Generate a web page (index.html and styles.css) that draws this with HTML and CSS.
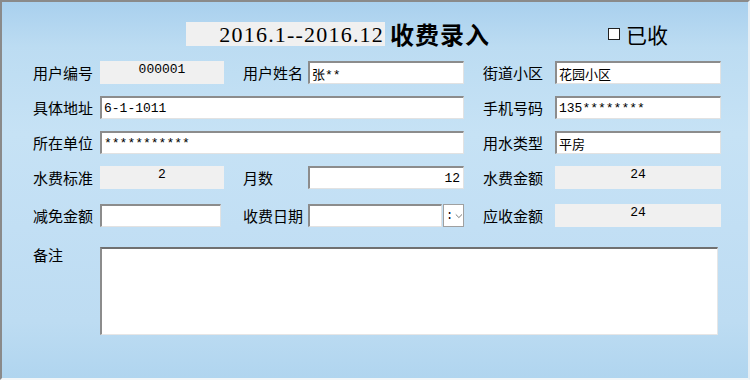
FILE: index.html
```html
<!DOCTYPE html>
<html lang="zh-CN">
<head>
  <meta charset="UTF-8">
  <title>收费录入</title>
  <link rel="stylesheet" href="styles.css">
</head>
<body>
  <div class="window">
    <!-- Header -->
    <div class="title-row">
      <div class="period">2016.1--2016.12</div>
      <h1 class="title">收费录入</h1>
      <label class="paid"><span class="check"></span>已收</label>
    </div>

    <!-- Form -->
    <div class="form">
      <div class="row">
        <span class="lbl c1">用户编号</span>
        <div class="readout c-f1">000001</div>
        <span class="lbl c2">用户姓名</span>
        <input class="field c-f2" value="张**">
        <span class="lbl c3">街道小区</span>
        <input class="field c-f3" value="花园小区">
      </div>

      <div class="row">
        <span class="lbl c1">具体地址</span>
        <input class="field wide" value="6-1-1011">
        <span class="lbl c3">手机号码</span>
        <input class="field c-f3" value="135********">
      </div>

      <div class="row">
        <span class="lbl c1">所在单位</span>
        <input class="field wide" value="***********">
        <span class="lbl c3">用水类型</span>
        <input class="field c-f3" value="平房">
      </div>

      <div class="row">
        <span class="lbl c1">水费标准</span>
        <div class="readout c-f1">2</div>
        <span class="lbl c2">月数</span>
        <input class="field c-f2 num" value="12">
        <span class="lbl c3">水费金额</span>
        <div class="readout c-f3">24</div>
      </div>

      <div class="row row-date">
        <span class="lbl c1">减免金额</span>
        <input class="field c-f1 short" value="">
        <span class="lbl c2">收费日期</span>
        <div class="date c-f2">
          <input class="field" value="">
          <span class="drop"><span class="colon">:</span><svg width="10" height="6" viewBox="0 0 10 6"><path d="M1 1 L5 5 L9 1" fill="none" stroke="#555" stroke-width="1"/></svg></span>
        </div>
        <span class="lbl c3">应收金额</span>
        <div class="readout c-f3">24</div>
      </div>

      <div class="row row-note">
        <span class="lbl c1 top">备注</span>
        <textarea class="note"></textarea>
      </div>
    </div>
  </div>
</body>
</html>
```

FILE: styles.css
```css
/* Window */
body {
  margin: 0;
  background: #fff;
  font-family: "Noto Sans CJK SC", "Liberation Sans", sans-serif;
  color: #000;
}

.window {
  box-sizing: border-box;
  width: 750px;
  height: 380px;
  border-top: 2px solid #8a8a8a;
  border-left: 2px solid #8a8a8a;
  border-right: 2px solid #e6eef4;
  border-bottom: 2px solid #f2f6f8;
  background: linear-gradient(180deg, #a9d0ee 0%, #bcdcf2 12%, #c6e2f5 35%, #c2dff4 60%, #bddcf2 85%, #b0d5ef 100%);
}

/* Header */
.title-row {
  display: flex;
  align-items: center;
  height: 24px;
  padding: 20px 0 0 184px;
}

.period {
  width: 199px;
  height: 24px;
  box-sizing: border-box;
  padding-right: 1px;
  background: #f0f0f0;
  font-family: "Liberation Serif", serif;
  font-size: 22px;
  letter-spacing: 1.2px;
  line-height: 25px;
  text-align: right;
  white-space: nowrap;
}

.title {
  margin: 0 0 0 5px;
  font-size: 24px;
  font-weight: bold;
  line-height: 24px;
  letter-spacing: 1px;
}

.paid {
  display: flex;
  align-items: center;
  margin-left: 118px;
  font-size: 21px;
  line-height: 24px;
}

.check {
  width: 10px;
  height: 10px;
  border: 1px solid #222;
  background: #fff;
  margin-right: 6px;
}

/* Form grid */
.form {
  display: flex;
  flex-direction: column;
  gap: 12px;
  padding: 15px 0 0 31px;
}

.row {
  display: grid;
  grid-template-columns: 67px 124px 19px 65px 156px 19px 72px 166px;
  height: 23px;
  align-items: center;
}

.row-date {
  margin-top: 3px;
}

.row-note {
  margin-top: 8px;
  height: 88px;
  align-items: start;
}

.lbl {
  font-size: 15px;
  line-height: 23px;
  white-space: nowrap;
}

.lbl.top {
  line-height: 16px;
}

.c1 { grid-column: 1; }
.c2 { grid-column: 4; }
.c3 { grid-column: 7; }
.c-f1 { grid-column: 2; }
.c-f2 { grid-column: 5; }
.c-f3 { grid-column: 8; }
.wide { grid-column: 2 / 6; }

.readout {
  height: 23px;
  background: #f0f0f0;
  font-family: "Liberation Mono", monospace;
  font-size: 13px;
  line-height: 18px;
  text-align: center;
}

.field {
  box-sizing: border-box;
  width: 100%;
  min-width: 0;
  height: 23px;
  margin: 0;
  padding: 0 2px;
  border-style: solid;
  border-width: 2px 1px 1px 2px;
  border-color: #8c8c8c #e2e2e2 #e2e2e2 #8c8c8c;
  background: #fff;
  font-family: "Liberation Mono", "Noto Sans CJK SC", monospace;
  font-size: 13px;
  color: #000;
  outline: none;
}

.field.short {
  width: 121px;
}

.field.num {
  text-align: right;
  padding-right: 3px;
}

.date {
  display: flex;
  height: 23px;
}

.date .field {
  flex: 1;
  width: auto;
}

.drop {
  display: flex;
  align-items: center;
  flex: none;
  box-sizing: border-box;
  width: 21px;
  height: 23px;
  margin-left: 1px;
  padding-left: 2px;
  gap: 2px;
  border: 1px solid #a0a0a0;
  background: #fff;
  font-size: 12px;
}

.colon {
  font-family: "Liberation Mono", monospace;
  line-height: 16px;
}

.note {
  grid-column: 2 / 9;
  box-sizing: border-box;
  width: 618px;
  height: 88px;
  margin: 0;
  border-style: solid;
  border-width: 2px 1px 1px 2px;
  border-color: #707070 #e6e6e6 #e6e6e6 #8c8c8c;
  background: #fff;
  resize: none;
  outline: none;
}
```
